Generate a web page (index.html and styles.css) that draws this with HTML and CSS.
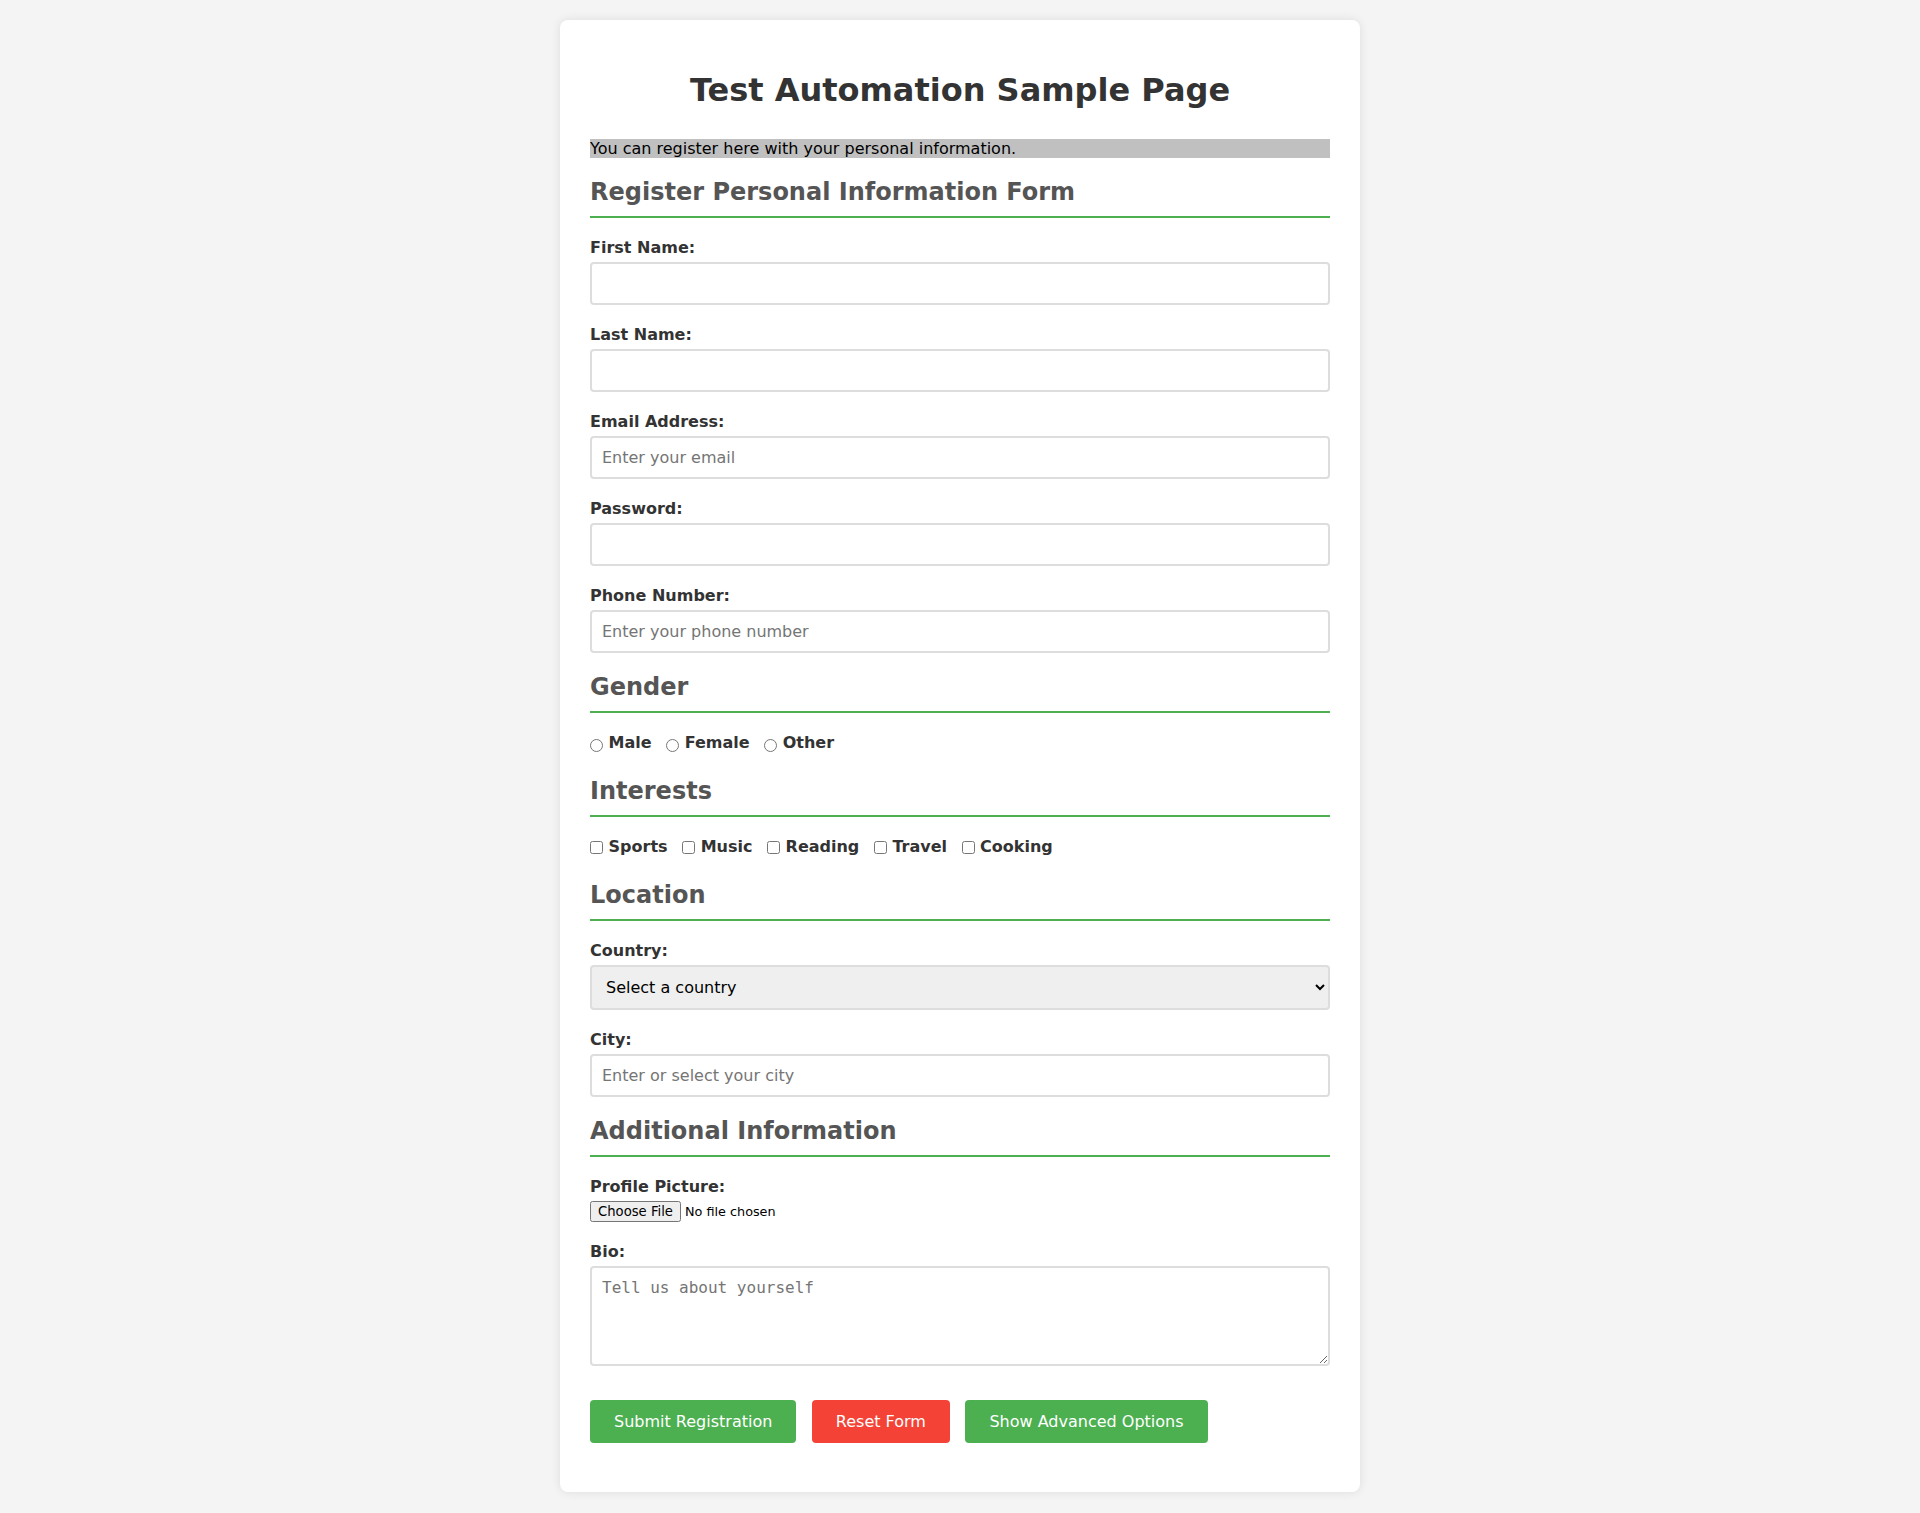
FILE: index.html
```html
<!DOCTYPE html>
<html lang="en">
<head>
<meta charset="utf-8">
<title>Test Automation Sample Page</title>
<link rel="stylesheet" href="styles.css">
</head>
<body>
<div class="container">
  <h1 class="title">Test Automation Sample Page</h1>
  <div class="intro">You can register here with your personal information.</div>

  <h2 class="section-title">Register Personal Information Form</h2>
  <div class="form-group">
    <label class="field-label" for="firstName">First Name:</label>
    <input class="text-input" type="text" id="firstName">
  </div>
  <div class="form-group">
    <label class="field-label" for="lastName">Last Name:</label>
    <input class="text-input" type="text" id="lastName">
  </div>
  <div class="form-group">
    <label class="field-label" for="email">Email Address:</label>
    <input class="text-input" type="email" id="email" placeholder="Enter your email">
  </div>
  <div class="form-group">
    <label class="field-label" for="password">Password:</label>
    <input class="text-input" type="password" id="password">
  </div>
  <div class="form-group">
    <label class="field-label" for="phone">Phone Number:</label>
    <input class="text-input" type="tel" id="phone" placeholder="Enter your phone number">
  </div>

  <h2 class="section-title">Gender</h2>
  <div class="form-group options">
    <label class="choice"><input class="radio-input" type="radio" name="gender" value="male"> Male</label>
    <label class="choice"><input class="radio-input" type="radio" name="gender" value="female"> Female</label>
    <label class="choice"><input class="radio-input" type="radio" name="gender" value="other"> Other</label>
  </div>

  <h2 class="section-title">Interests</h2>
  <div class="form-group options">
    <label class="choice"><input class="check-input" type="checkbox" value="sports"> Sports</label>
    <label class="choice"><input class="check-input" type="checkbox" value="music"> Music</label>
    <label class="choice"><input class="check-input" type="checkbox" value="reading"> Reading</label>
    <label class="choice"><input class="check-input" type="checkbox" value="travel"> Travel</label>
    <label class="choice"><input class="check-input" type="checkbox" value="cooking"> Cooking</label>
  </div>

  <h2 class="section-title">Location</h2>
  <div class="form-group">
    <label class="field-label" for="country">Country:</label>
    <select class="select-input" id="country">
      <option>Select a country</option>
      <option>United States</option>
      <option>Canada</option>
      <option>United Kingdom</option>
    </select>
  </div>
  <div class="form-group">
    <label class="field-label" for="city">City:</label>
    <input class="text-input" type="text" id="city" placeholder="Enter or select your city">
  </div>

  <h2 class="section-title">Additional Information</h2>
  <div class="form-group">
    <label class="field-label" for="profilePic">Profile Picture:</label>
    <input class="file-input" type="file" id="profilePic">
  </div>
  <div class="form-group">
    <label class="field-label" for="bio">Bio:</label>
    <textarea class="text-area" id="bio" rows="4" placeholder="Tell us about yourself"></textarea>
  </div>

  <div class="actions">
    <button class="btn btn-primary" type="button">Submit Registration</button>
    <button class="btn btn-danger" type="button">Reset Form</button>
    <button class="btn btn-primary" type="button">Show Advanced Options</button>
  </div>
</div>
</body>
</html>
```

FILE: styles.css
```css
html, body {
  margin: 0;
}

body {
  padding: 20px 20px 19px;
  background: #f4f4f4;
  font-family: "DejaVu Sans", sans-serif;
  font-size: 16px;
  color: #000;
}

.container {
  box-sizing: border-box;
  max-width: 800px;
  margin: 0 auto;
  padding: 30px;
  background: #fff;
  border-radius: 8px;
  box-shadow: 0 0 10px rgba(0, 0, 0, 0.1);
}

.title {
  font-size: 32px;
  color: #333;
  text-align: center;
  margin: 21.44px 0 30px;
}

.intro {
  background: #c0c0c0;
  color: #000;
}

.section-title {
  font-size: 24px;
  color: #555;
  margin: 19.92px 0;
  padding-bottom: 10px;
  border-bottom: 2px solid #4caf50;
}

.form-group {
  margin-bottom: 20px;
}

.field-label {
  display: block;
  font-weight: bold;
  color: #333;
  margin-bottom: 5px;
}

.text-input,
.select-input {
  display: block;
  box-sizing: border-box;
  width: 100%;
  margin: 0;
  padding: 10px;
  border: 2px solid #ddd;
  border-radius: 4px;
  font-family: "DejaVu Sans", sans-serif;
  font-size: 16px;
  color: #000;
  background: #fff;
}

.select-input {
  background-color: #efefef;
}

.text-area {
  display: block;
  box-sizing: border-box;
  width: 100%;
  margin: 0;
  padding: 10px;
  border: 2px solid #ddd;
  border-radius: 4px;
  font-family: "DejaVu Sans Mono", monospace;
  font-size: 16px;
}

.file-input {
  margin: 0;
  font-family: "DejaVu Sans", sans-serif;
  font-size: 12.8px;
}

.file-input::file-selector-button {
  font-family: "DejaVu Sans", sans-serif;
  font-size: 13.2px;
  padding: 1px 6px;
  margin-right: 4px;
}

.options {
  display: flex;
  align-items: flex-start;
  gap: 14.5px;
}

.choice {
  display: block;
  font-weight: bold;
  color: #333;
  margin-bottom: 5px;
}

.radio-input {
  margin: 3px 0 0 0;
  vertical-align: middle;
}

.check-input {
  margin: 0;
  vertical-align: middle;
}

.actions {
  display: flex;
  gap: 15.5px;
  margin-top: 34.5px;
  margin-bottom: 19px;
}

.btn {
  padding: 12px 24px;
  border: none;
  border-radius: 4px;
  color: #fff;
  font-family: "DejaVu Sans", sans-serif;
  font-size: 16px;
  cursor: pointer;
}

.btn-primary {
  background: #4caf50;
}

.btn-danger {
  background: #f44336;
}
```
